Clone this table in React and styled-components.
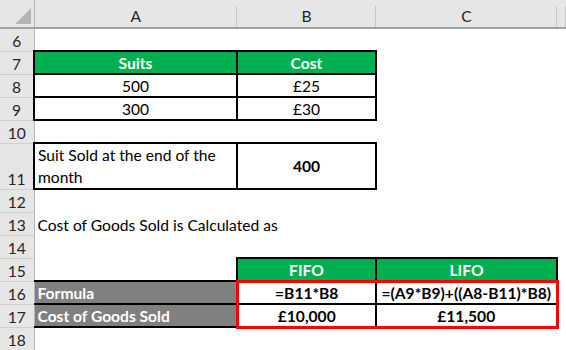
import styled, { createGlobalStyle } from "styled-components";

const GlobalStyle = createGlobalStyle`
  body {
    margin: 0;
    background: #fff;
    font-family: "Lato", "Liberation Sans", sans-serif;
  }
`;

const GREEN = "#00b050";
const GRAY = "#808080";
const INK = "2px solid #000";
const RED = "3px solid #f00";

const Sheet = styled.table`
  border-collapse: collapse;
  table-layout: fixed;
  width: 566px;
  font-size: 15.6px;
  color: #000;
`;

const ColHead = styled.th`
  position: relative;
  height: 27px;
  padding: 0;
  background: #e6e6e6;
  border-bottom: 2px solid #a3a3a3;
  font-weight: 400;
  color: #262626;
  text-align: center;
  vertical-align: bottom;
  line-height: 22px;
  &::after {
    content: "";
    position: absolute;
    right: 0;
    top: 6px;
    bottom: 0;
    width: 1px;
    background: #c6c6c6;
  }
`;

const Corner = styled(ColHead)`
  border-right: 1px solid #b5b5b5;
  &::after {
    display: none;
  }
  svg {
    position: absolute;
    right: 3px;
    bottom: 3px;
  }
`;

const Row = styled.tr`
  height: ${(p) => (p.$tall ? 46 : 23)}px;
`;

const RowHead = styled.td`
  padding: 0;
  background: #e6e6e6;
  border-right: 1px solid #b5b5b5;
  border-bottom: 1px solid #cfcfcf;
  color: #262626;
  text-align: center;
  vertical-align: bottom;
  line-height: 20px;
`;

const Cell = styled.td`
  padding: 0 3px;
  white-space: ${(p) => (p.$wrap ? "normal" : "nowrap")};
  overflow: visible;
  background: ${(p) => (p.$fill === "green" ? GREEN : p.$fill === "gray" ? GRAY : "#fff")};
  color: ${(p) => (p.$fill ? "#fff" : "#000")};
  font-weight: ${(p) => (p.$bold ? 700 : 400)};
  text-align: ${(p) => p.$align || "left"};
  vertical-align: ${(p) => p.$valign || "bottom"};
  line-height: ${(p) => (p.$wrap ? 22 : 20)}px;
  border-top: ${(p) => p.$t || "none"};
  border-right: ${(p) => p.$r || "none"};
  border-bottom: ${(p) => p.$b || "none"};
  border-left: ${(p) => p.$l || "none"};
`;

const boxed = { $t: INK, $r: INK, $b: INK, $l: INK };

function CornerMark() {
  return (
    <svg width="16" height="16" viewBox="0 0 16 16">
      <polygon points="16,0 16,16 0,16" fill="#b4b4b4" />
    </svg>
  );
}

export default function App() {
  return (
    <>
      <GlobalStyle />
      <Sheet>
        <colgroup>
          <col style={{ width: 34 }} />
          <col style={{ width: 203 }} />
          <col style={{ width: 139 }} />
          <col style={{ width: 181 }} />
          <col style={{ width: 9 }} />
        </colgroup>
        <thead>
          <tr>
            <Corner>
              <CornerMark />
            </Corner>
            <ColHead>A</ColHead>
            <ColHead>B</ColHead>
            <ColHead>C</ColHead>
            <ColHead />
          </tr>
        </thead>
        <tbody>
          <Row>
            <RowHead>6</RowHead>
            <Cell />
            <Cell />
            <Cell />
            <Cell />
          </Row>
          <Row>
            <RowHead>7</RowHead>
            <Cell {...boxed} $fill="green" $bold $align="center">Suits</Cell>
            <Cell {...boxed} $fill="green" $bold $align="center">Cost</Cell>
            <Cell />
            <Cell />
          </Row>
          <Row>
            <RowHead>8</RowHead>
            <Cell {...boxed} $align="center">500</Cell>
            <Cell {...boxed} $align="center">£25</Cell>
            <Cell />
            <Cell />
          </Row>
          <Row>
            <RowHead>9</RowHead>
            <Cell {...boxed} $align="center">300</Cell>
            <Cell {...boxed} $align="center">£30</Cell>
            <Cell />
            <Cell />
          </Row>
          <Row>
            <RowHead>10</RowHead>
            <Cell />
            <Cell />
            <Cell />
            <Cell />
          </Row>
          <Row $tall>
            <RowHead>11</RowHead>
            <Cell {...boxed} $wrap>Suit Sold at the end of the month</Cell>
            <Cell {...boxed} $bold $align="center" $valign="middle">400</Cell>
            <Cell />
            <Cell />
          </Row>
          <Row>
            <RowHead>12</RowHead>
            <Cell />
            <Cell />
            <Cell />
            <Cell />
          </Row>
          <Row>
            <RowHead>13</RowHead>
            <Cell>Cost of Goods Sold is Calculated as</Cell>
            <Cell />
            <Cell />
            <Cell />
          </Row>
          <Row>
            <RowHead>14</RowHead>
            <Cell />
            <Cell />
            <Cell />
            <Cell />
          </Row>
          <Row>
            <RowHead>15</RowHead>
            <Cell $b={INK} />
            <Cell {...boxed} $b={RED} $fill="green" $bold $align="center">FIFO</Cell>
            <Cell {...boxed} $b={RED} $fill="green" $bold $align="center">LIFO</Cell>
            <Cell />
          </Row>
          <Row>
            <RowHead>16</RowHead>
            <Cell $t={INK} $b={INK} $fill="gray" $bold>Formula</Cell>
            <Cell {...boxed} $t={RED} $l={RED} $bold $align="center">=B11*B8</Cell>
            <Cell {...boxed} $t={RED} $r={RED} $bold $align="center">=(A9*B9)+((A8-B11)*B8)</Cell>
            <Cell />
          </Row>
          <Row>
            <RowHead>17</RowHead>
            <Cell $t={INK} $b={INK} $fill="gray" $bold>Cost of Goods Sold</Cell>
            <Cell {...boxed} $b={RED} $l={RED} $bold $align="center">£10,000</Cell>
            <Cell {...boxed} $b={RED} $r={RED} $bold $align="center">£11,500</Cell>
            <Cell />
          </Row>
          <Row>
            <RowHead>18</RowHead>
            <Cell />
            <Cell />
            <Cell />
            <Cell />
          </Row>
        </tbody>
      </Sheet>
    </>
  );
}
